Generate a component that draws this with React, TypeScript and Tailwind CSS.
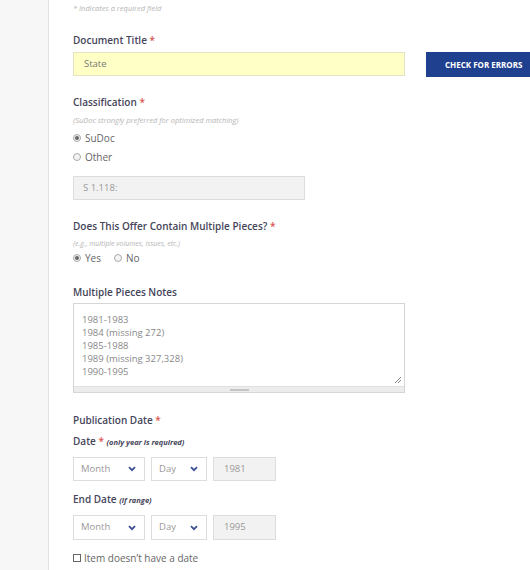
import React from "react";

const Star = () => <span className="text-[#d9534f]"> *</span>;

function Radio({ checked, label }: { checked?: boolean; label: string }) {
  return (
    <span className="inline-flex items-center">
      <span className="w-[8px] h-[8px] rounded-full border border-[#aaa] bg-[#f4f4f4] flex items-center justify-center">
        {checked && <span className="w-[4px] h-[4px] rounded-full bg-[#666]" />}
      </span>
      <span className="ml-[4px] text-[10px] text-[#666]">{label}</span>
    </span>
  );
}

function Chevron() {
  return (
    <svg width="8" height="6" viewBox="0 0 8 6" className="shrink-0">
      <path d="M1 1.2 L4 4.2 L7 1.2" fill="none" stroke="#3b4f93" strokeWidth="1.8" />
    </svg>
  );
}

function Select({ w, label }: { w: string; label: string }) {
  return (
    <div className={`${w} h-full border border-[#ddd] bg-white flex items-center justify-between pl-[7px] pr-[8px]`}>
      <span className="text-[9.5px] text-[#999]">{label}</span>
      <Chevron />
    </div>
  );
}

function DateRow({ year, h }: { year: string; h: string }) {
  return (
    <div className={`flex gap-[6px] ${h}`}>
      <Select w="w-[72px]" label="Month" />
      <Select w="w-[56px]" label="Day" />
      <div className="w-[63px] h-full border border-[#ddd] bg-[#f2f2f2] flex items-center pl-[10px] text-[9.5px] text-[#999]">
        {year}
      </div>
    </div>
  );
}

export default function App() {
  return (
    <div
      className="flex w-[530px] h-[570px] overflow-hidden bg-white"
      style={{ fontFamily: '"Open Sans", "Liberation Sans", sans-serif' }}
    >
      <div className="w-[49px] shrink-0 bg-[#f7f7f7] border-r border-[#e3e3e3]" />
      <div className="flex-1 pl-[24px] flex flex-col">
        <div className="h-[16px] leading-[16px] text-[7.5px] italic text-[#b5b5b5]">* Indicates a required field</div>

        <div className="mt-[17px] leading-[14px] text-[10px] font-semibold text-[#45455a]">
          Document Title<Star />
        </div>
        <div className="mt-[5px] flex gap-[21px] h-[25px]">
          <div className="w-[332px] h-[24px] bg-[#ffffc6] border border-[#e2e2c4] flex items-center pl-[10px] text-[9.5px] text-[#777]">
            State
          </div>
          <div className="w-[114px] shrink-0 h-[25px] bg-[#1f3f8f] flex items-center pl-[19px] text-[8px] font-bold text-white whitespace-nowrap">
            CHECK FOR ERRORS
          </div>
        </div>

        <div className="mt-[18px] leading-[14px] text-[10px] font-semibold text-[#45455a]">
          Classification<Star />
        </div>
        <div className="mt-[5px] leading-[12px] text-[7.5px] italic text-[#b5b5b5]">
          (SuDoc strongly preferred for optimized matching)
        </div>
        <div className="mt-[5px] leading-[14px] h-[14px] flex">
          <Radio checked label="SuDoc" />
        </div>
        <div className="mt-[5px] leading-[14px] h-[14px] flex">
          <Radio label="Other" />
        </div>
        <div className="mt-[12px] w-[232px] h-[24px] bg-[#f2f2f2] border border-[#ddd] flex items-center pl-[9px] text-[9.5px] text-[#999]">
          S 1.118:
        </div>

        <div className="mt-[19px] leading-[14px] text-[10px] font-semibold text-[#45455a]">
          Does This Offer Contain Multiple Pieces?<Star />
        </div>
        <div className="mt-[5px] leading-[12px] text-[7px] italic text-[#b5b5b5]">(e.g., multiple volumes, issues, etc.)</div>
        <div className="mt-[1px] leading-[14px] h-[14px] flex gap-[13px]">
          <Radio checked label="Yes" />
          <Radio label="No" />
        </div>

        <div className="mt-[20px] leading-[14px] text-[10px] font-semibold text-[#45455a]">Multiple Pieces Notes</div>
        <div className="mt-[4px] w-[332px] h-[90px] border border-[#d6d6d6] flex flex-col">
          <div className="relative flex-1 pl-[8px] pt-[9px] text-[9.5px] leading-[13px] text-[#888]">
            <div>1981-1983</div>
            <div>1984 (missing 272)</div>
            <div>1985-1988</div>
            <div>1989 (missing 327,328)</div>
            <div>1990-1995</div>
            <svg width="8" height="8" viewBox="0 0 8 8" className="absolute right-[2px] bottom-[2px]">
              <path d="M1 7 L7 1 M4 7 L7 4" stroke="#666" strokeWidth="0.8" />
            </svg>
          </div>
          <div className="h-[6px] bg-[#ececec] border-t border-[#e0e0e0] flex justify-center items-center">
            <div className="w-[19px] h-[2px] bg-[#c4c4c4]" />
          </div>
        </div>

        <div className="mt-[20px] leading-[14px] text-[10px] font-semibold text-[#45455a]">
          Publication Date<Star />
        </div>
        <div className="mt-[7px] leading-[14px] text-[10px] font-semibold text-[#45455a]">
          Date<Star /> <span className="text-[7.5px] italic font-bold">(only year is required)</span>
        </div>
        <div className="mt-[8px]">
          <DateRow year="1981" h="h-[24px]" />
        </div>
        <div className="mt-[11px] leading-[14px] text-[10px] font-semibold text-[#45455a]">
          End Date <span className="text-[7.5px] italic font-bold">(if range)</span>
        </div>
        <div className="mt-[8px]">
          <DateRow year="1995" h="h-[25px]" />
        </div>
        <div className="mt-[11px] leading-[14px] flex items-center">
          <span className="w-[8px] h-[8px] border border-[#666] bg-white" />
          <span className="ml-[3px] text-[10px] text-[#666]">Item doesn’t have a date</span>
        </div>
      </div>
    </div>
  );
}
